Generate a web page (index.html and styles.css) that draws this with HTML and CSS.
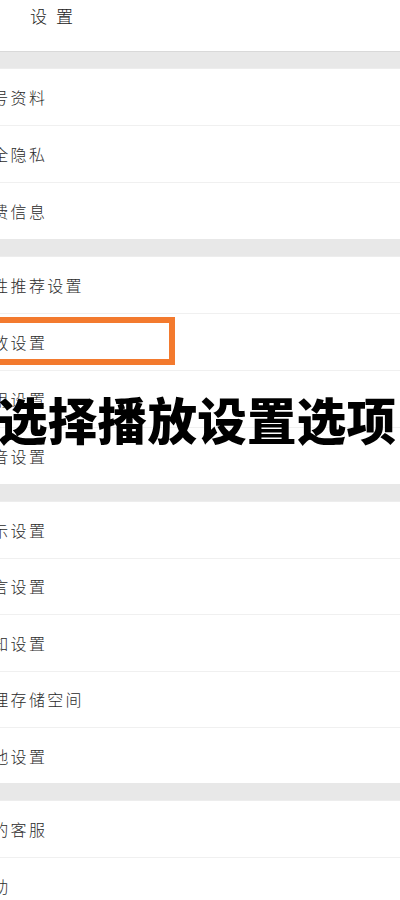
FILE: index.html
```html
<!DOCTYPE html>
<html lang="zh">
<head>
<meta charset="utf-8">
<title>设置</title>
<link rel="stylesheet" href="styles.css">
</head>
<body>
<div class="page">
  <header class="topbar"><span class="title">设置</span></header>
  <div class="gap"></div>
  <section class="group">
    <div class="row"><span class="label">账号资料</span></div>
    <div class="row"><span class="label">安全隐私</span></div>
    <div class="row"><span class="label">消费信息</span></div>
  </section>
  <div class="gap"></div>
  <section class="group">
    <div class="row"><span class="label">个性推荐设置</span></div>
    <div class="row"><span class="label">播放设置</span></div>
    <div class="row"><span class="label">通用设置</span></div>
    <div class="row"><span class="label">声音设置</span></div>
  </section>
  <div class="gap"></div>
  <section class="group tight">
    <div class="row"><span class="label">显示设置</span></div>
    <div class="row"><span class="label">语言设置</span></div>
    <div class="row"><span class="label">通知设置</span></div>
    <div class="row"><span class="label">清理存储空间</span></div>
    <div class="row"><span class="label">其他设置</span></div>
  </section>
  <div class="gap"></div>
  <section class="group">
    <div class="row"><span class="label">我的客服</span></div>
    <div class="row"><span class="label">帮助</span></div>
  </section>

  <div class="highlight"></div>
  <div class="banner">选择播放设置选项</div>
</div>
</body>
</html>
```

FILE: styles.css
```css
* { box-sizing: border-box; }
html, body { margin: 0; padding: 0; }
body {
  background: #fff;
  font-family: "Noto Sans CJK SC", "Noto Sans", sans-serif;
  color: #333;
  width: 400px;
  height: 900px;
  overflow: hidden;
}
.page { position: relative; width: 400px; height: 900px; overflow: hidden; }
.topbar {
  height: 52px;
  display: flex;
  align-items: center;
  padding-left: 30px;
  padding-bottom: 20px;
  background: #fff;
  border-bottom: 1px solid #d9d9d9;
}
.title {
  font-size: 17px;
  font-weight: 300;
  letter-spacing: 9px;
  color: #222;
}
.gap {
  height: 18px;
  background: #e8e8e8;
  border-bottom: 1px solid #ededed;
}
.topbar + .gap { height: 17px; }
.group { background: #fff; }
.row {
  height: 57px;
  display: flex;
  align-items: center;
  border-bottom: 1px solid #f0f0f0;
}
.row:last-child { height: 56px; border-bottom: none; }
.tight .row { height: 56.5px; }
.tight .row:last-child { height: 55px; }
.label {
  font-size: 16px;
  font-weight: 300;
  letter-spacing: 2.3px;
  margin-left: -26px;
  white-space: nowrap;
  color: #2b2b2b;
}
.highlight {
  position: absolute;
  left: -12px;
  top: 317px;
  width: 187px;
  height: 48px;
  border: 6px solid #f37a2e;
}
.banner {
  position: absolute;
  left: -2px;
  top: 389px;
  width: 410px;
  font-size: 49.5px;
  line-height: 60px;
  font-weight: 900;
  color: #000;
  white-space: nowrap;
  letter-spacing: 0.3px;
  text-shadow: 0 0 2px #fff;
}
```
